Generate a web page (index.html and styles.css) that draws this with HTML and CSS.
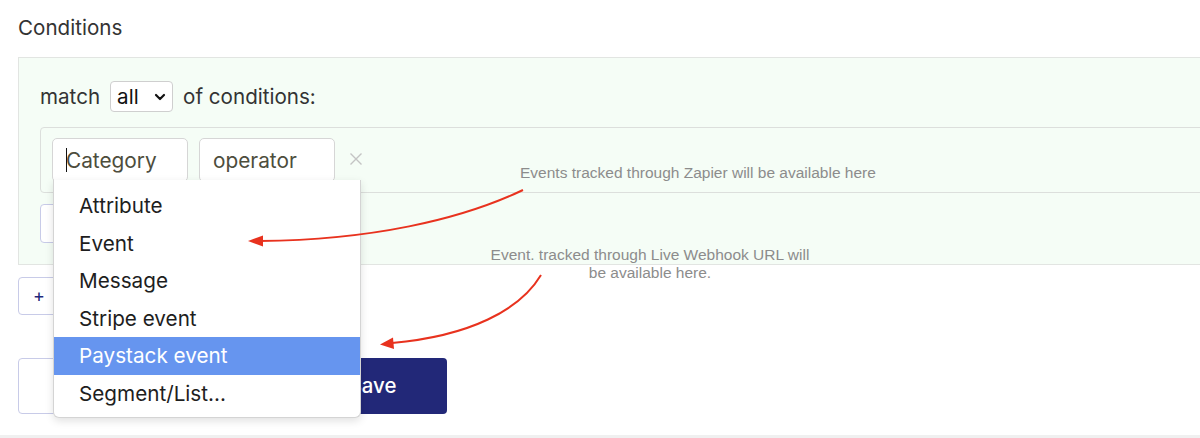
FILE: index.html
```html
<!DOCTYPE html>
<html>
<head>
<meta charset="utf-8">
<link rel="stylesheet" href="styles.css">
</head>
<body>
<div class="page">
  <h2 class="title">Conditions</h2>
  <div class="panel">
    <div class="match-row">
      <span>match</span>
      <span class="select">all <svg class="chev" width="12" height="8" viewBox="0 0 12 8"><path d="M2 2 L6 6 L10 2" fill="none" stroke="#111" stroke-width="2.2" stroke-linecap="round" stroke-linejoin="round"/></svg></span>
      <span>of conditions:</span>
    </div>
    <div class="cond-row">
      <div class="field field-cat"><span class="caret"></span>Category</div>
      <div class="field">operator</div>
      <svg class="remove" width="12" height="12" viewBox="0 0 12 12"><path d="M0.5 0.5 L11.5 11.5 M11.5 0.5 L0.5 11.5" stroke="#c4c4c4" stroke-width="1.4"/></svg>
    </div>
    <div class="add-cond"></div>
  </div>
  <div class="add-group"><span class="plus">+</span></div>
  <div class="actions">
    <div class="btn-cancel"></div>
    <div class="btn-save">Save</div>
  </div>
  <div class="footer-bar"></div>

  <ul class="menu">
    <li>Attribute</li>
    <li>Event</li>
    <li>Message</li>
    <li>Stripe event</li>
    <li class="active">Paystack event</li>
    <li>Segment/List...</li>
  </ul>

  <div class="note note-1">Events tracked through Zapier will be available here</div>
  <div class="note note-2">Event. tracked through Live Webhook URL will<br>be available here.</div>

  <svg class="arrows" width="1200" height="438" viewBox="0 0 1200 438">
    <path d="M523,190 C460,220 370,240 260,241" fill="none" stroke="#e8321e" stroke-width="2"/>
    <polygon points="248,241 263,235.5 263,246.5" fill="#e8321e"/>
    <path d="M541,275 C520,310 470,336 392,343" fill="none" stroke="#e8321e" stroke-width="2"/>
    <polygon points="380,344.5 393,337.5 394,349" fill="#e8321e"/>
  </svg>
</div>
</body>
</html>
```
FILE: styles.css
```css
html, body {
  margin: 0;
  padding: 0;
  background: #fff;
  overflow: hidden;
}
.page {
  position: relative;
  width: 1200px;
  height: 438px;
  font-family: Inter, "Noto Sans", sans-serif;
  color: #333;
}
.title {
  margin: 0;
  padding: 15px 0 0 18px;
  font-size: 20.6px;
  font-weight: 400;
  line-height: 25px;
  color: #333;
}
.panel {
  margin: 17px -20px 0 18px;
  background: #f5fdf6;
  border: 1px solid #e2e5e2;
  padding: 23px 0 21px 21px;
}
.match-row {
  display: flex;
  align-items: center;
  gap: 10px;
  font-size: 20.6px;
  color: #333;
  height: 31px;
}
.select {
  display: flex;
  align-items: center;
  justify-content: space-between;
  box-sizing: border-box;
  width: 63px;
  height: 31px;
  padding: 0 6px 0 6px;
  border: 1px solid #cfcfcf;
  border-radius: 4px;
  background: #fff;
  color: #111;
  font-size: 20.6px;
}
.chev {
  display: block;
}
.cond-row {
  margin-top: 15px;
  display: flex;
  align-items: center;
  gap: 11px;
  box-sizing: border-box;
  height: 66px;
  padding: 0 11px;
  border: 1px solid #dcdfdc;
  border-radius: 4px;
}
.field {
  box-sizing: border-box;
  width: 136px;
  height: 44px;
  display: flex;
  align-items: center;
  padding-left: 13px;
  border: 1px solid #d6d6d6;
  border-radius: 5px;
  background: #fff;
  color: #4d4d3c;
  font-size: 20.8px;
}
.caret {
  display: inline-block;
  width: 1px;
  height: 24px;
  background: #111;
  margin-right: -1px;
}
.remove {
  display: block;
  margin-left: 4px;
  margin-top: -3px;
}
.add-cond {
  margin-top: 11px;
  box-sizing: border-box;
  width: 160px;
  height: 39px;
  border: 1px solid #c8cbe8;
  border-radius: 4px;
  background: #fff;
}
.add-group {
  margin: 12px 0 0 18px;
  box-sizing: border-box;
  width: 160px;
  height: 38px;
  border: 1px solid #c8cbe8;
  border-radius: 4px;
  background: #fff;
  font-size: 18px;
  line-height: 35px;
  padding-left: 14px;
  color: #21277a;
}
.actions {
  margin: 43px 0 0 18px;
  display: flex;
  gap: 8px;
}
.btn-cancel {
  box-sizing: border-box;
  width: 272px;
  height: 56px;
  border: 1px solid #c8cbe8;
  border-radius: 4px;
  background: #fff;
}
.btn-save {
  box-sizing: border-box;
  width: 149px;
  height: 56px;
  border-radius: 4px;
  background: #222878;
  color: #fff;
  font-size: 20.4px;
  font-weight: 500;
  line-height: 56px;
  text-align: center;
}
.footer-bar {
  margin-top: 21px;
  height: 8px;
  background: #f0f0f0;
}
.menu {
  position: absolute;
  left: 53px;
  top: 180px;
  width: 308px;
  box-sizing: border-box;
  margin: 0;
  padding: 7px 0 5px;
  list-style: none;
  background: #fff;
  border: 1px solid #d4d4d4;
  border-top: none;
  border-radius: 0 0 6px 6px;
  box-shadow: 0 3px 8px rgba(0, 0, 0, 0.12);
}
.menu li {
  height: 37.5px;
  line-height: 37.5px;
  padding-left: 25px;
  font-size: 20.7px;
  color: #1e1e1e;
}
.menu li.active {
  background: #6695ef;
  color: #fff;
}
.note {
  position: absolute;
  font-family: "Liberation Sans", Arial, sans-serif;
  font-size: 15.5px;
  color: #8c8c8c;
  line-height: 18px;
  text-align: center;
  white-space: nowrap;
}
.note-1 {
  left: 520px;
  top: 164px;
}
.note-2 {
  left: 450px;
  top: 246px;
  width: 400px;
}
.arrows {
  position: absolute;
  left: 0;
  top: 0;
  pointer-events: none;
}
```
